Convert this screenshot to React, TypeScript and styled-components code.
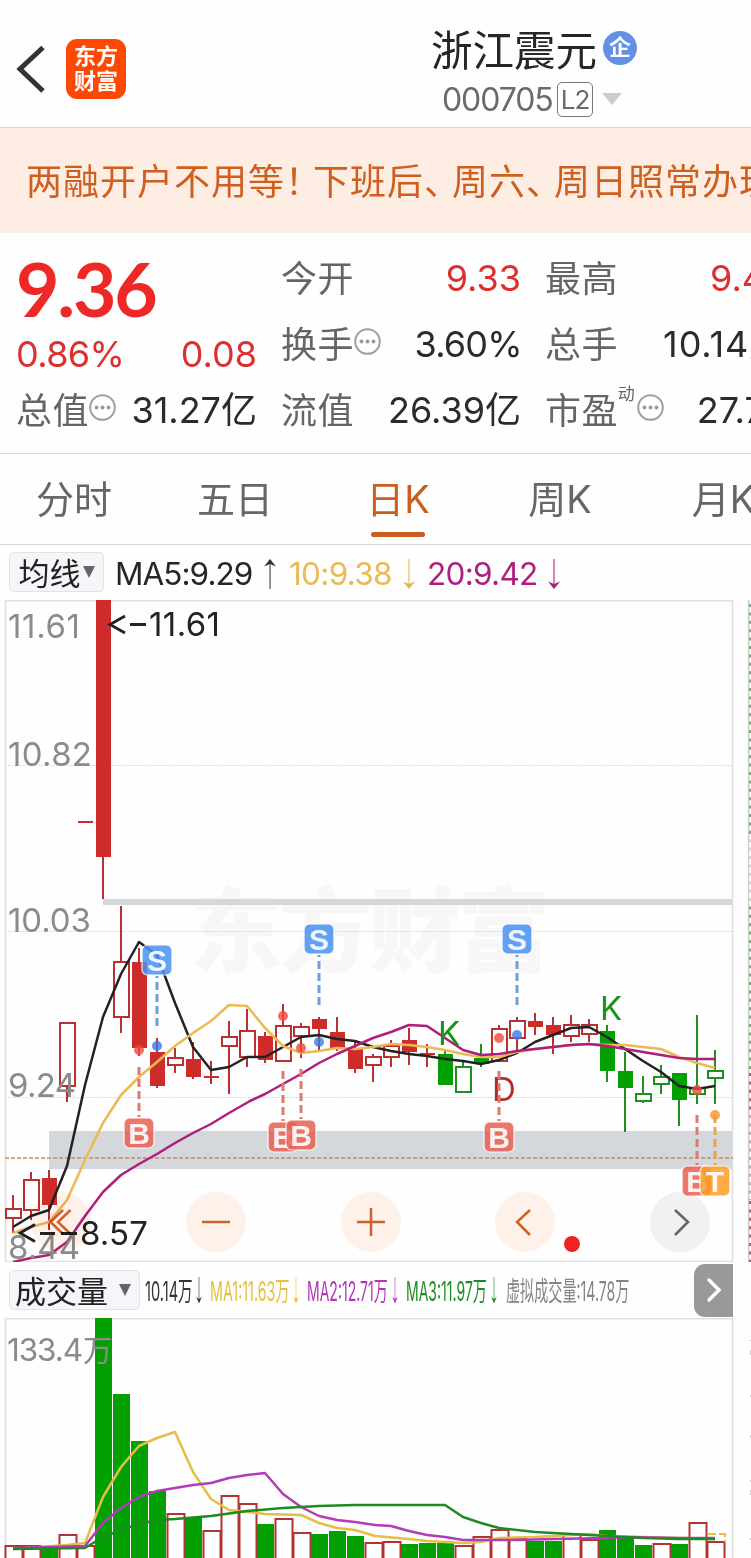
import React from "react";
import styled, { createGlobalStyle } from "styled-components";

const GlobalStyle = createGlobalStyle`
  * { box-sizing: border-box; }
  html, body { margin: 0; padding: 0; background: #fff; overflow: hidden; }
  body { font-family: Inter, "Noto Sans CJK SC", sans-serif; color: #262626; }
`;

const Page = styled.div`
  width: 751px;
  height: 1558px;
  overflow: hidden;
  background: #fefefe;
  display: flex;
  flex-direction: column;
`;

/* ---------- header ---------- */

const Header = styled.header`
  flex: none;
  height: 128px;
  border-bottom: 1px solid #d3d8d6;
  display: grid;
  grid-template-columns: 431px 1fr;
`;

const HeaderLeft = styled.div`
  display: flex;
  align-items: center;
  gap: 20px;
  padding: 10px 0 0 16px;
`;

const AppLogo = styled.div`
  width: 60px;
  height: 60px;
  border-radius: 11px;
  background: #fd4803;
  color: #fff;
  font-weight: 700;
  font-size: 22px;
  line-height: 25px;
  text-align: center;
  padding-top: 5px;
`;

const HeaderTitle = styled.div`
  padding-top: 25px;
`;

const NameRow = styled.div`
  display: flex;
  align-items: center;
  height: 48px;
  gap: 7px;
`;

const StockName = styled.h1`
  margin: 3px 0 0;
  font-weight: 400;
  font-size: 41.5px;
  line-height: 48px;
  width: 165px;
  white-space: nowrap;
`;

const CompanyBadge = styled.span`
  width: 34px;
  height: 34px;
  border-radius: 50%;
  background: #6490e4;
  color: #fff;
  font-size: 22px;
  font-weight: 700;
  line-height: 33px;
  text-align: center;
  margin-top: -2px;
`;

const CodeRow = styled.div`
  display: flex;
  align-items: center;
  height: 36px;
  margin-top: 8px;
  padding-left: 11px;
  color: #6a6a6a;
`;

const Code = styled.span`
  font-size: 32px;
  letter-spacing: -1.1px;
  width: 115px;
`;

const LevelTag = styled.span`
  width: 36px;
  height: 35px;
  border: 1.5px solid #777;
  border-radius: 5px;
  font-size: 26px;
  line-height: 33px;
  text-align: center;
  letter-spacing: -1px;
  margin-right: 9px;
`;

const Triangle = styled.i<{ $w: number; $h: number; $color: string }>`
  flex: none;
  border-left: ${(p) => p.$w / 2}px solid transparent;
  border-right: ${(p) => p.$w / 2}px solid transparent;
  border-top: ${(p) => p.$h}px solid ${(p) => p.$color};
`;

/* ---------- banner ---------- */

const Banner = styled.div`
  flex: none;
  height: 105px;
  background: #fdede3;
  color: #cf5f1f;
  font-size: 36px;
  letter-spacing: 1px;
  line-height: 108px;
  padding-left: 26px;
  white-space: nowrap;
  overflow: hidden;
`;

const Punct = styled.span`
  display: inline-block;
  width: 28px;
  vertical-align: top;
`;

/* ---------- quote ---------- */

const Quote = styled.section`
  flex: none;
  height: 221px;
  border-bottom: 1px solid #d8d8d8;
  display: grid;
  grid-template-columns: 241px 240px 242px;
  grid-template-rows: repeat(3, 66px);
  column-gap: 24px;
  padding: 12px 0 0 16px;
  overflow: hidden;
`;

const Price = styled.div`
  font-family: Lato, sans-serif;
  font-size: 75px;
  font-weight: 700;
  line-height: 86px;
  letter-spacing: -2.2px;
  color: #ee2727;
`;

const Cell = styled.div<{ $drop?: number }>`
  display: flex;
  align-items: center;
  justify-content: space-between;
  height: 66px;
  padding-top: ${(p) => p.$drop ?? 0}px;
  white-space: nowrap;
`;

const Label = styled.span`
  display: flex;
  align-items: center;
  font-size: 36px;
  line-height: 44px;
  letter-spacing: 0.4px;
  color: #656565;

  svg { margin-bottom: 5px; }
`;

const LabelText = styled.span`
  padding-top: 2px;
`;

const Sup = styled.sup`
  font-size: 17px;
  line-height: 17px;
  letter-spacing: 0;
  align-self: flex-start;
  margin: -1px 2px 0 0;
`;

const Value = styled.span<{ $up?: boolean; $ls?: number }>`
  font-size: 36px;
  line-height: 44px;
  letter-spacing: ${(p) => p.$ls ?? 0}px;
  margin-right: ${(p) => p.$ls ?? 0}px;
  color: ${(p) => (p.$up ? "#dc2f2f" : "#2b2b2b")};
`;

/* ---------- tabs ---------- */

const Tabs = styled.nav`
  flex: none;
  height: 91px;
  border-bottom: 1px solid #d8d8d8;
  display: flex;
  overflow: hidden;
`;

const Tab = styled.div<{ $active?: boolean; $width: number }>`
  flex: none;
  width: ${(p) => p.$width}px;
  display: flex;
  flex-direction: column;
  align-items: center;
  font-size: 38px;
  line-height: 54px;
  padding-top: 18px;
  color: ${(p) => (p.$active ? "#cb5d1e" : "#666")};
`;

const TabMark = styled.i`
  width: 54px;
  height: 5px;
  border-radius: 3px;
  background: #cb5d1e;
  margin-top: 6px;
`;

/* ---------- indicator bars ---------- */

const IndicatorBar = styled.div`
  flex: none;
  height: 55px;
  display: flex;
  align-items: center;
  padding: 0 0 1px 9px;
  white-space: nowrap;

  > svg { margin-top: 4px; }
`;

const Picker = styled.div<{ $width: number; $gap: number; $shift?: number }>`
  flex: none;
  width: ${(p) => p.$width}px;
  height: 40px;
  border: 1px solid #dfe2e7;
  border-radius: 5px;
  background: #f5f6f9;
  display: flex;
  align-items: center;
  justify-content: center;
  gap: ${(p) => p.$gap}px;
  padding-right: ${(p) => p.$shift ?? 0}px;
  font-size: 31px;
  line-height: 40px;
  color: #222;
`;

const PickerText = styled.span`
  padding-top: 3px;
`;

const MaValue = styled.span<{ $color: string; $width: number; $ls: number }>`
  width: ${(p) => p.$width}px;
  flex: none;
  font-size: 31.5px;
  line-height: 38px;
  padding-top: 4px;
  letter-spacing: ${(p) => p.$ls}px;
  color: ${(p) => p.$color};
`;

const VolumeBar = styled.div`
  flex: none;
  height: 56px;
  display: flex;
  align-items: center;
  padding-left: 9px;
  width: 733px;
  white-space: nowrap;
`;

const Slot = styled.span<{ $width: number }>`
  flex: none;
  width: ${(p) => p.$width}px;
`;

const Narrow = styled.span<{ $color: string; $scale: number }>`
  display: inline-block;
  transform: scaleX(${(p) => p.$scale});
  transform-origin: left center;
  font-size: 27px;
  line-height: 34px;
  padding-top: 4px;
  color: ${(p) => p.$color};
`;

const MoreButton = styled.div`
  width: 39px;
  height: 53px;
  margin-left: auto;
  border-radius: 11px 0 0 11px;
  background: #999;
  display: flex;
  align-items: center;
  justify-content: center;
`;

/* ---------- charts ---------- */

const ChartArea = styled.div<{ $height: number }>`
  flex: none;
  position: relative;
  height: ${(p) => p.$height}px;
  svg { display: block; }
`;

const Controls = styled.div`
  position: absolute;
  left: 31px;
  top: 592px;
  display: flex;
  gap: 94.75px;
  mix-blend-mode: multiply;
`;

const RoundButton = styled.div<{ $muted?: boolean }>`
  width: 60px;
  height: 60px;
  border-radius: 50%;
  background: ${(p) => (p.$muted ? "#f2f2f2" : "#fef2eb")};
`;

const SANS = 'Inter, "Noto Sans CJK SC", sans-serif';

const cx = (i: number) => 13 + 18 * i;

type Kind = "r" | "R" | "g" | "G";
/* lower case is hollow, upper case is filled: high, body top, body bottom, low */
const candles: [Kind, number, number, number, number][] = [
  ["r", 1195, 1209, 1218, 1233], ["r", 1172, 1180, 1210, 1220], ["R", 1170, 1178, 1205, 1230],
  ["r", 1023, 1023, 1086, 1102], ["R", 822, 821, 823, 822], ["R", 600, 600, 857, 899],
  ["r", 906, 962, 1017, 1033], ["R", 948, 962, 1048, 1056], ["R", 1038, 1052, 1086, 1088],
  ["r", 1048, 1058, 1065, 1073], ["R", 1042, 1059, 1077, 1079], ["R", 1061, 1076, 1078, 1084],
  ["r", 1021, 1037, 1046, 1094], ["r", 1009, 1031, 1057, 1067], ["R", 1032, 1036, 1060, 1063],
  ["r", 1004, 1026, 1061, 1061], ["r", 1023, 1027, 1036, 1058], ["R", 1017, 1019, 1029, 1050],
  ["R", 1017, 1032, 1048, 1051], ["R", 1041, 1048, 1069, 1073], ["r", 1054, 1057, 1065, 1082],
  ["r", 1040, 1046, 1057, 1067], ["R", 1028, 1040, 1052, 1065], ["R", 1044, 1053, 1055, 1067],
  ["G", 1051, 1054, 1085, 1085], ["g", 1062, 1067, 1092, 1092], ["G", 1044, 1058, 1064, 1067],
  ["r", 1025, 1029, 1061, 1061], ["r", 1017, 1021, 1038, 1052], ["R", 1013, 1021, 1027, 1035],
  ["R", 1017, 1025, 1035, 1054], ["r", 1015, 1025, 1036, 1042], ["r", 1019, 1025, 1034, 1042],
  ["G", 1025, 1031, 1071, 1082], ["G", 1052, 1071, 1088, 1132], ["g", 1076, 1094, 1101, 1103],
  ["g", 1065, 1077, 1084, 1094], ["G", 1073, 1073, 1100, 1126], ["g", 1015, 1088, 1094, 1104],
  ["g", 1050, 1071, 1078, 1104],
];

const ma5 = "13,1227 31,1216 49,1210 67,1166 85,1085 103,1017 121,974 139,942 157,955 175,1003 193,1047 211,1070 229,1067 247,1057 265,1057 283,1047 301,1037 319,1035 337,1039 355,1041 373,1047 391,1051 409,1054 427,1056 445,1059 463,1061 481,1064 499,1060 517,1053 535,1042 553,1035 571,1028 589,1027 607,1037 625,1049 643,1061 661,1072 679,1086 697,1089 715,1086";
const ma10 = "13,1233 31,1227 49,1222 67,1200 85,1160 103,1123 121,1095 139,1077 157,1062 175,1046 193,1033 211,1021 229,1005 247,1006 265,1028 283,1046 301,1053 319,1051 337,1048 355,1049 373,1047 391,1044 409,1045 427,1047 445,1050 463,1054 481,1057 499,1057 517,1052 535,1049 571,1045 589,1044 607,1045 625,1045 661,1049 679,1057 697,1063 715,1068";
const ma20 = "13,1262 31,1258 49,1255 67,1242 85,1216 103,1192 121,1175 139,1164 157,1154 175,1143 193,1133 211,1124 229,1113 250,1101 265,1094 283,1084 301,1074 319,1063 337,1054 355,1046 373,1038 391,1032 409,1025 427,1026 445,1038 463,1050 481,1055 499,1054 517,1051 535,1049 571,1045 589,1044 607,1046 643,1052 679,1058 697,1059 715,1059";

const volumes: [Kind, number][] = [
  ["r", 1546], ["r", 1546], ["G", 1547], ["r", 1535], ["r", 1546], ["G", 1318], ["G", 1394], ["G", 1441],
  ["G", 1491], ["r", 1514], ["G", 1517], ["r", 1531], ["r", 1496], ["r", 1504], ["G", 1524], ["r", 1519],
  ["r", 1533], ["G", 1534], ["G", 1531], ["G", 1536], ["r", 1543], ["r", 1542], ["G", 1544], ["G", 1543],
  ["G", 1543], ["r", 1546], ["r", 1537], ["r", 1530], ["r", 1538], ["G", 1541], ["G", 1541], ["r", 1534],
  ["r", 1540], ["G", 1530], ["G", 1538], ["G", 1545], ["r", 1544], ["G", 1544], ["r", 1523], ["r", 1542],
];

const vma1 = "13,1549 67,1545 85,1543 103,1497 121,1467 139,1446 157,1438 175,1432 193,1472 211,1499 229,1510 247,1512 265,1514 301,1515 319,1523 337,1528 355,1530 375,1536 409,1539 427,1541 445,1542 463,1543 481,1542 499,1538 535,1537 571,1535 590,1534 607,1536 643,1537 715,1539";
const vma2 = "13,1548 85,1546 103,1523 121,1508 139,1497 157,1491 175,1488 193,1485 211,1483 229,1478 247,1475 265,1473 283,1494 301,1507 319,1516 337,1520 355,1522 375,1525 391,1526 409,1531 427,1535 445,1537 463,1540 517,1540 553,1539 607,1538 625,1537 679,1538 715,1538";
const vma3 = "13,1549 85,1548 103,1537 121,1530 139,1524 157,1520 175,1519 211,1516 247,1511 283,1508 319,1506 355,1505 445,1505 463,1517 481,1523 499,1528 535,1532 571,1534 607,1536 643,1538 679,1539 715,1539";

const UP = "#ce2c2b";
const DOWN = "#02a002";

const Candle = ({ i }: { i: number }) => {
  const [kind, high, top, bottom, low] = candles[i];
  const up = kind === "r" || kind === "R";
  const filled = kind === "R" || kind === "G";
  const line = up ? "#b8302f" : "#1f8f22";
  const x = cx(i);
  return (
    <g>
      {high < top && <path d={`M${x} ${high}V${top}`} stroke={line} strokeWidth={2} />}
      {low > bottom && <path d={`M${x} ${bottom}V${low}`} stroke={line} strokeWidth={2} />}
      {filled ? (
        <rect x={x - 7} y={top} width={15} height={bottom - top} fill={up ? UP : DOWN} />
      ) : (
        <rect x={x - 7} y={top} width={15} height={bottom - top} fill="#fff" stroke={line} strokeWidth={2} />
      )}
    </g>
  );
};

interface MarkProps {
  x: number;
  y: number;
  from: number;
  dot: number;
  letter: string;
}

const Mark = ({ x, y, from, dot, letter }: MarkProps) => {
  const box = letter === "S" ? "#4c92f2" : letter === "B" ? "#ea6153" : "#fd9f28";
  const dash = letter === "S" ? "#6d9fdc" : letter === "B" ? "#dc7b70" : "#e9a545";
  const point = letter === "S" ? "#3b78e8" : letter === "B" ? "#f2493b" : "#f09a2c";
  return (
    <g>
      <path d={`M${x} ${from}v50`} stroke={dash} strokeWidth={3} strokeDasharray="8 4" strokeDashoffset={letter === "S" ? 6 : 0} />
      <circle cx={x} cy={dot} r={5} fill={point} opacity={0.8} />
      <rect x={x - 15} y={y - 15} width={30} height={30} rx={5.5} fill={box} opacity={0.86} stroke="#fff" strokeWidth={1.2} />
      <text x={x} y={y + 10.5} textAnchor="middle" fontFamily='"Liberation Sans", sans-serif' fontWeight={700} fontSize={30} fill="#fff" fillOpacity={0.9}>
        {letter}
      </text>
    </g>
  );
};

interface ChartTextProps {
  x: number;
  y: number;
  w?: number;
  size?: number;
  fill?: string;
  children: string;
}

const ChartText = ({ x, y, w, size = 33, fill = "#8b8b8b", children }: ChartTextProps) => (
  <text x={x} y={y} textLength={w} fontFamily={SANS} fontSize={size} fill={fill}>
    {children}
  </text>
);

const Line = ({ points, color }: { points: string; color: string }) => (
  <polyline points={points} fill="none" stroke={color} strokeWidth={2.5} strokeLinejoin="round" />
);

const SidePanelEdge = () => (
  <g strokeWidth={3}>
    <path d="M748.7 600V1262" stroke="#c9c9c9" strokeWidth={1.5} />
    <path d="M750.5 604V1072" stroke="#6bb266" strokeDasharray="3 5.4" />
    <path d="M750.5 838V904" stroke="#fff" strokeOpacity={0.6} />
    <path d="M750.5 1073V1110" stroke="#cd5456" strokeDasharray="3 5.4" />
    <path d="M750.5 1115V1200" stroke="#cda3a3" strokeDasharray="3 5.4" />
    <path d="M750.5 1201V1262" stroke="#cd5456" strokeDasharray="3 5.4" />
  </g>
);

const PriceChart = () => (
  <svg width="751" height="662" viewBox="0 600 751 662">
    <g fontFamily={SANS} fontWeight={800} fontSize={92} fill="#f7f7f7">
      <text x={190} y={965} textLength={360}>东方财富</text>
    </g>
    <path d="M103 902H732" stroke="#d4d7dc" strokeWidth={6} />
    <path d="M49 1150H732" stroke="#d4d7dc" strokeWidth={38} />
    <g stroke="#d2d2d2" strokeWidth={1} strokeDasharray="1.5 1.5">
      <path d="M5 765.5H732M5 931.5H732M5 1097.5H732" />
    </g>
    <rect x={5.5} y={600.8} width={727} height={660.8} fill="none" stroke="#e0e0e0" strokeWidth={1.6} />
    {candles.map((_, i) => (
      <Candle key={i} i={i} />
    ))}
    <path d="M5 1158H733" stroke="#c98a66" strokeWidth={1.4} strokeDasharray="4 2" />
    <Line points={ma5} color="#222" />
    <Line points={ma10} color="#ecb953" />
    <Line points={ma20} color="#ad1e7d" />
    <ChartText x={8} y={638} w={72}>11.61</ChartText>
    <ChartText x={8} y={766} w={84}>10.82</ChartText>
    <ChartText x={8} y={932} w={83}>10.03</ChartText>
    <ChartText x={8} y={1097} w={68}>9.24</ChartText>
    <ChartText x={8} y={1259} w={72}>8.44</ChartText>
    <g fill="none" stroke="#222" strokeWidth={2.8}>
      <path d="M125 616L110 624.5L125 633M130 624.5H146" />
      <path d="M35 1224.5L20 1233L35 1241.5M40 1233.5H55M61 1233.5H77" />
    </g>
    <ChartText x={149} y={636} w={71} fill="#222">11.61</ChartText>
    <ChartText x={80} y={1245} w={68} fill="#222">8.57</ChartText>
    <ChartText x={438} y={1045} fill="#17951a">K</ChartText>
    <ChartText x={600} y={1020} fill="#17951a">K</ChartText>
    <ChartText x={492} y={1101} fill="#b52b2b">D</ChartText>
    <Mark x={157} y={960} from={976} dot={1046} letter="S" />
    <Mark x={319} y={939} from={955} dot={1042} letter="S" />
    <Mark x={517} y={939} from={955} dot={1035} letter="S" />
    <Mark x={139} y={1133} from={1067} dot={1050} letter="B" />
    <Mark x={283} y={1137} from={1071} dot={1016} letter="B" />
    <Mark x={301} y={1135} from={1069} dot={1048} letter="B" />
    <Mark x={499} y={1137} from={1071} dot={1038} letter="B" />
    <Mark x={697} y={1181} from={1115} dot={1090} letter="B" />
    <Mark x={715} y={1181} from={1115} dot={1115} letter="T" />
    <circle cx={572} cy={1244} r={8} fill="#ee2424" />
    <SidePanelEdge />
  </svg>
);

const VolumeChart = () => (
  <svg width="751" height="240" viewBox="0 1318 751 240">
    <path d="M5.5 1560V1318.8H732.5V1560" fill="none" stroke="#e0e0e0" strokeWidth={1.6} />
    {volumes.map(([kind, top], i) =>
      kind === "G" ? (
        <rect key={i} x={cx(i) - 8} y={top} width={17} height={1560 - top} fill={DOWN} />
      ) : (
        <rect key={i} x={cx(i) - 7.5} y={top} width={17} height={1564 - top} fill="#fff" stroke="#b03433" strokeWidth={2} />
      )
    )}
    <Line points={vma1} color="#e2bf45" />
    <Line points={vma2} color="#b23cb6" />
    <Line points={vma3} color="#1f8a22" />
    <path d="M707 1534H725V1542" fill="none" stroke="#e5be4a" strokeWidth={2} strokeDasharray="9 3" />
    <ChartText x={7} y={1361} w={76} size={31.5}>133.4</ChartText>
    <ChartText x={83} y={1361} size={29.5}>万</ChartText>
    <path d="M750.5 1340V1341M750.5 1350V1355M750.5 1395V1397M750.5 1435V1438M750.5 1480V1482M750.5 1490V1495M750.5 1538V1540" stroke="#ccc" />
  </svg>
);

const Arrow = ({ color, up }: { color: string; up?: boolean }) => (
  <svg width="14" height="32" viewBox="0 0 14 32" fill={color}>
    <g transform={up ? undefined : "rotate(180 7 16)"}>
      <path d="M6.3 3h1.5v28H6.3z" opacity={0.7} />
      <path d="M7 1L13 8.5L7 6L1 8.5Z" />
    </g>
  </svg>
);

const SlimArrow = ({ color }: { color: string }) => (
  <svg width="8" height="30" viewBox="0 0 8 30">
    <path d="M4 2V26" stroke={color} strokeWidth={1.2} opacity={0.5} />
    <path d="M1.3 22L4 28.5L6.7 22L4 24Z" fill={color} />
  </svg>
);

const More = () => (
  <svg width="27" height="27" viewBox="0 0 27 27" fill="#999">
    <circle cx="13.5" cy="13.5" r="12.3" fill="none" stroke="#a0a0a0" strokeWidth="2" />
    <circle cx="7.5" cy="13.5" r="1.9" />
    <circle cx="13.5" cy="13.5" r="1.9" />
    <circle cx="19.5" cy="13.5" r="1.9" />
  </svg>
);

const Glyph = ({ d, color = "#cf6228" }: { d: string; color?: string }) => (
  <svg width="60" height="60" viewBox="0 0 60 60">
    <path d={d} fill="none" stroke={color} strokeWidth={2.5} />
  </svg>
);

const volumeLegend: { text: string; color: string; width: number; gap: number; scale: number }[] = [
  { text: "10.14万", color: "#333", width: 50, gap: 7, scale: 0.54 },
  { text: "MA1:11.63万", color: "#e6bf3c", width: 82, gap: 7, scale: 0.53 },
  { text: "MA2:12.71万", color: "#b535ba", width: 84, gap: 7, scale: 0.52 },
  { text: "MA3:11.97万", color: "#1f8c22", width: 84, gap: 8, scale: 0.52 },
];

export default function App() {
  return (
    <Page>
      <GlobalStyle />
      <Header>
        <HeaderLeft>
          <svg width="30" height="50" viewBox="0 0 30 50">
            <path d="M27 3.5L4 25L27 47" fill="none" stroke="#333" strokeWidth="5" />
          </svg>
          <AppLogo>
            东方
            <br />
            财富
          </AppLogo>
        </HeaderLeft>
        <HeaderTitle>
          <NameRow>
            <StockName>浙江震元</StockName>
            <CompanyBadge>企</CompanyBadge>
          </NameRow>
          <CodeRow>
            <Code>000705</Code>
            <LevelTag>L2</LevelTag>
            <Triangle $w={20} $h={12} $color="#ccc" />
          </CodeRow>
        </HeaderTitle>
      </Header>

      <Banner>
        两融开户不用等<Punct>！</Punct>下班后<Punct>、</Punct>周六<Punct>、</Punct>周日照常办理
      </Banner>

      <Quote>
        <Price>9.36</Price>
        <Cell>
          <Label><LabelText>今开</LabelText></Label>
          <Value $up>9.33</Value>
        </Cell>
        <Cell>
          <Label><LabelText>最高</LabelText></Label>
          <Value $up>9.45</Value>
        </Cell>
        <Cell $drop={20}>
          <Value $up $ls={-0.6}>0.86%</Value>
          <Value $up>0.08</Value>
        </Cell>
        <Cell>
          <Label><LabelText>换手</LabelText><More /></Label>
          <Value $ls={-0.8}>3.60%</Value>
        </Cell>
        <Cell>
          <Label><LabelText>总手</LabelText></Label>
          <Value $ls={0.9}>10.14万</Value>
        </Cell>
        <Cell>
          <Label><LabelText>总值</LabelText><More /></Label>
          <Value>31.27亿</Value>
        </Cell>
        <Cell>
          <Label><LabelText>流值</LabelText></Label>
          <Value>26.39亿</Value>
        </Cell>
        <Cell>
          <Label><LabelText>市盈</LabelText><Sup>动</Sup><More /></Label>
          <Value>27.70</Value>
        </Cell>
      </Quote>

      <Tabs>
        <Tab $width={148}>分时</Tab>
        <Tab $width={174}>五日</Tab>
        <Tab $width={152} $active>日K<TabMark /></Tab>
        <Tab $width={172}>周K</Tab>
        <Tab $width={155}>月K</Tab>
      </Tabs>

      <IndicatorBar>
        <Picker $width={95} $gap={2}>
          <PickerText>均线</PickerText>
          <Triangle $w={13} $h={12} $color="#666" />
        </Picker>
        <Slot $width={11} />
        <MaValue $color="#262626" $width={148} $ls={-0.95}>MA5:9.29</MaValue>
        <Arrow color="#333" up />
        <Slot $width={12} />
        <MaValue $color="#e9ba55" $width={113} $ls={-0.7}>10:9.38</MaValue>
        <Arrow color="#e2b553" />
        <Slot $width={11} />
        <MaValue $color="#ad1e7d" $width={120} $ls={-0.7}>20:9.42</MaValue>
        <Arrow color="#ad1e7d" />
      </IndicatorBar>

      <ChartArea $height={662}>
        <PriceChart />
        <Controls>
          <RoundButton><Glyph d="M32 18L19.5 30L32 42M39.5 18L27 30L39.5 42" /></RoundButton>
          <RoundButton><Glyph d="M16 30H44" /></RoundButton>
          <RoundButton><Glyph d="M16 30H44M30 16V44" /></RoundButton>
          <RoundButton><Glyph d="M35 18L22 30L35 43" /></RoundButton>
          <RoundButton $muted><Glyph color="#666" d="M25 18L38 30L25 43" /></RoundButton>
        </Controls>
      </ChartArea>

      <VolumeBar>
        <Picker $width={131} $gap={11} $shift={3}>
          <PickerText>成交量</PickerText>
          <Triangle $w={13} $h={12} $color="#666" />
        </Picker>
        <Slot $width={5} />
        {volumeLegend.map((item) => (
          <React.Fragment key={item.text}>
            <Slot $width={item.width}>
              <Narrow $color={item.color} $scale={item.scale}>{item.text}</Narrow>
            </Slot>
            <SlimArrow color={item.color} />
            <Slot $width={item.gap} />
          </React.Fragment>
        ))}
        <Slot $width={126}>
          <Narrow $color="#858585" $scale={0.522}>虚拟成交量:14.78万</Narrow>
        </Slot>
        <MoreButton>
          <svg width="18" height="28" viewBox="0 0 18 28">
            <path d="M4 4L14 14L4 24" fill="none" stroke="#fff" strokeWidth="3.5" strokeLinecap="round" />
          </svg>
        </MoreButton>
      </VolumeBar>

      <ChartArea $height={240}>
        <VolumeChart />
      </ChartArea>
    </Page>
  );
}
